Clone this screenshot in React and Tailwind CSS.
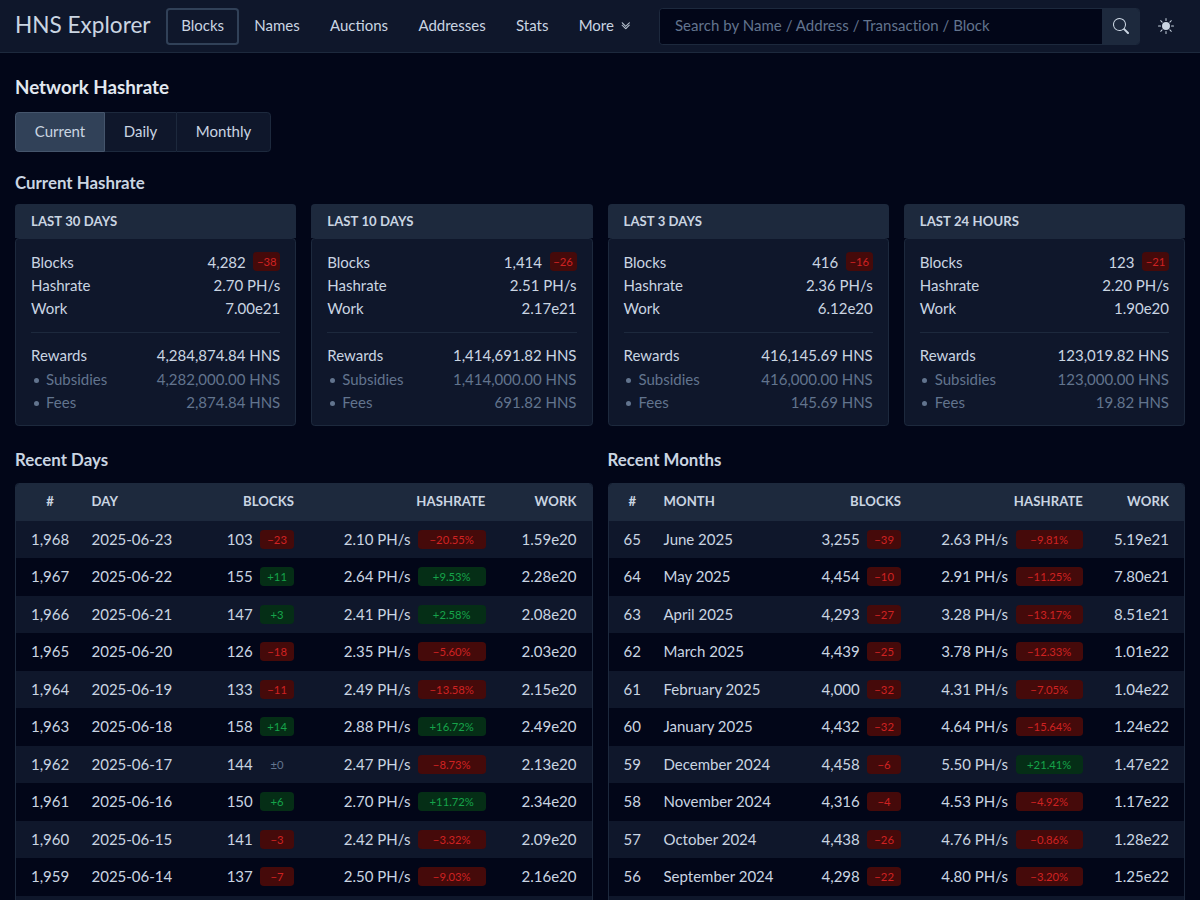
import React from "react";
import { BsSearch, BsChevronDoubleDown, BsSunFill } from "react-icons/bs";

const periods = [
  { title: "Last 30 Days", blocks: "4,282", diff: "−38", hashrate: "2.70 PH/s", work: "7.00e21", rewards: "4,284,874.84", subsidies: "4,282,000.00", fees: "2,874.84" },
  { title: "Last 10 Days", blocks: "1,414", diff: "−26", hashrate: "2.51 PH/s", work: "2.17e21", rewards: "1,414,691.82", subsidies: "1,414,000.00", fees: "691.82" },
  { title: "Last 3 Days", blocks: "416", diff: "−16", hashrate: "2.36 PH/s", work: "6.12e20", rewards: "416,145.69", subsidies: "416,000.00", fees: "145.69" },
  { title: "Last 24 Hours", blocks: "123", diff: "−21", hashrate: "2.20 PH/s", work: "1.90e20", rewards: "123,019.82", subsidies: "123,000.00", fees: "19.82" },
];

const days = [
  ["1,968", "2025-06-23", "103", "−23", "2.10 PH/s", "−20.55%", "1.59e20"],
  ["1,967", "2025-06-22", "155", "+11", "2.64 PH/s", "+9.53%", "2.28e20"],
  ["1,966", "2025-06-21", "147", "+3", "2.41 PH/s", "+2.58%", "2.08e20"],
  ["1,965", "2025-06-20", "126", "−18", "2.35 PH/s", "−5.60%", "2.03e20"],
  ["1,964", "2025-06-19", "133", "−11", "2.49 PH/s", "−13.58%", "2.15e20"],
  ["1,963", "2025-06-18", "158", "+14", "2.88 PH/s", "+16.72%", "2.49e20"],
  ["1,962", "2025-06-17", "144", "±0", "2.47 PH/s", "−8.73%", "2.13e20"],
  ["1,961", "2025-06-16", "150", "+6", "2.70 PH/s", "+11.72%", "2.34e20"],
  ["1,960", "2025-06-15", "141", "−3", "2.42 PH/s", "−3.32%", "2.09e20"],
  ["1,959", "2025-06-14", "137", "−7", "2.50 PH/s", "−9.03%", "2.16e20"],
];

const months = [
  ["65", "June 2025", "3,255", "−39", "2.63 PH/s", "−9.81%", "5.19e21"],
  ["64", "May 2025", "4,454", "−10", "2.91 PH/s", "−11.25%", "7.80e21"],
  ["63", "April 2025", "4,293", "−27", "3.28 PH/s", "−13.17%", "8.51e21"],
  ["62", "March 2025", "4,439", "−25", "3.78 PH/s", "−12.33%", "1.01e22"],
  ["61", "February 2025", "4,000", "−32", "4.31 PH/s", "−7.05%", "1.04e22"],
  ["60", "January 2025", "4,432", "−32", "4.64 PH/s", "−15.64%", "1.24e22"],
  ["59", "December 2024", "4,458", "−6", "5.50 PH/s", "+21.41%", "1.47e22"],
  ["58", "November 2024", "4,316", "−4", "4.53 PH/s", "−4.92%", "1.17e22"],
  ["57", "October 2024", "4,438", "−26", "4.76 PH/s", "−0.86%", "1.28e22"],
  ["56", "September 2024", "4,298", "−22", "4.80 PH/s", "−3.20%", "1.25e22"],
];

function tone(value) {
  if (value.startsWith("+")) return "bg-[#052e16] text-[#16a34a]";
  if (value.startsWith("−")) return "bg-[#450a0a] text-[#cf2222]";
  return "text-slate-500";
}

function Badge({ value, size }) {
  return (
    <span className={`flex h-[18.75px] items-center justify-center rounded-[3.75px] text-[11.25px] leading-none ${size} ${tone(value)}`}>
      {value}
    </span>
  );
}

function NavItem({ children, active }) {
  return (
    <a className={`flex h-[37px] items-center rounded-[3.75px] border-2 px-[13.15px] pb-[2px] ${active ? "border-slate-700" : "border-transparent"}`}>
      {children}
    </a>
  );
}

function Line({ label, children }) {
  return (
    <div className="flex h-[23.44px] items-center justify-between">
      <span>{label}</span>
      <span className="flex items-center gap-[7.5px]">{children}</span>
    </div>
  );
}

function SubLine({ label, children }) {
  return (
    <div className="flex h-[23.44px] items-center justify-between text-slate-500">
      <span className="flex items-center">
        <span className="mt-[2px] mr-[7.5px] ml-[2.5px] size-[5px] rounded-full bg-slate-500" />
        {label}
      </span>
      <span>{children}</span>
    </div>
  );
}

function PeriodCard({ data }) {
  return (
    <section className="flex h-[222px] flex-col">
      <h3 className="flex h-[34px] shrink-0 items-center rounded-t-[3.75px] bg-slate-800 px-4 pb-px text-[13.125px] font-bold tracking-[0.08px] uppercase">
        {data.title}
      </h3>
      <div className="grow rounded-[3.75px] border border-slate-800 bg-slate-900 px-[15px] pt-[10.7px]">
        <Line label="Blocks">
          {data.blocks}
          <Badge value={data.diff} size="w-[27px]" />
        </Line>
        <Line label="Hashrate">{data.hashrate}</Line>
        <Line label="Work">{data.work}</Line>
        <hr className="mt-[11.3px] mb-[11.2px] border-slate-800" />
        <Line label="Rewards">{data.rewards} HNS</Line>
        <SubLine label="Subsidies">{data.subsidies} HNS</SubLine>
        <SubLine label="Fees">{data.fees} HNS</SubLine>
      </div>
    </section>
  );
}

function HistoryTable({ title, unit, rows, columns }) {
  return (
    <section className="min-w-0">
      <h2 className="mb-[11px] text-[16.875px] leading-[24px] font-bold">{title}</h2>
      <div className="overflow-hidden rounded-t-[3.75px] border border-slate-800">
        <div className={`grid h-[36.5px] items-center bg-slate-800 px-[15px] pb-[2px] text-[13.125px] font-bold tracking-[0.08px] uppercase ${columns}`}>
          <span className="text-center">#</span>
          <span className="pl-[22.5px]">{unit}</span>
          <span className="text-right">Blocks</span>
          <span className="text-right">Hashrate</span>
          <span className="text-right">Work</span>
        </div>
        {rows.map((r) => (
          <div key={r[0]} className={`grid h-[37.5px] items-center px-[15px] pb-px odd:bg-slate-950 even:bg-slate-900 ${columns}`}>
            <span className="text-center">{r[0]}</span>
            <span className="pl-[22.5px]">{r[1]}</span>
            <span className="flex items-center justify-end gap-[7.5px]">
              {r[2]}
              <Badge value={r[3]} size="w-[33.75px]" />
            </span>
            <span className="flex items-center justify-end gap-[7.5px]">
              {r[4]}
              <Badge value={r[5]} size="w-[67.5px]" />
            </span>
            <span className="text-right">{r[6]}</span>
          </div>
        ))}
        <div className="h-[37.5px] bg-slate-900" />
      </div>
    </section>
  );
}

export default function App() {
  return (
    <div className="h-[900px] w-[1200px] overflow-hidden bg-slate-950 font-['Lato',sans-serif] text-[15px] leading-[22.5px] text-slate-300">
      <header className="flex h-[53px] items-center border-b border-slate-800 bg-slate-900 px-[15px]">
        <a className="w-[151px] shrink-0 pb-[2px] text-[22.6px]">HNS Explorer</a>
        <nav className="flex shrink-0">
          <NavItem active>Blocks</NavItem>
          <NavItem>Names</NavItem>
          <NavItem>Auctions</NavItem>
          <NavItem>Addresses</NavItem>
          <NavItem>Stats</NavItem>
          <NavItem>
            More
            <BsChevronDoubleDown className="mt-[2px] ml-[7px] size-[9.5px] stroke-[0.8]" />
          </NavItem>
        </nav>
        <div className="mr-[18px] ml-auto flex h-[37px] w-[481px] shrink-0 overflow-hidden rounded-[3.75px] border border-slate-800">
          <div className="flex grow items-center bg-slate-950 px-[15px] pb-[2px] tracking-[0.03px] text-slate-500">
            Search by Name / Address / Transaction / Block
          </div>
          <button className="flex w-[37px] items-center justify-center bg-slate-800 pl-px">
            <BsSearch className="size-4" />
          </button>
        </div>
        <BsSunFill className="mr-[11px] size-4 shrink-0" />
      </header>

      <main className="px-[15px] pt-[19.5px]">
        <h1 className="text-[18.75px] leading-[28px] font-bold text-slate-200">Network Hashrate</h1>
        <div className="mt-[11.5px] flex h-[40px]">
          <button className="w-[90px] rounded-l-[3.75px] border border-slate-600 bg-slate-700 pb-px">Current</button>
          <button className="w-[71px] border-y border-slate-800 bg-slate-900 pb-px">Daily</button>
          <button className="w-[95px] rounded-r-[3.75px] border border-slate-800 bg-slate-900 pb-px">Monthly</button>
        </div>
        <h2 className="mt-[18.5px] text-[16.875px] leading-[24px] font-bold">Current Hashrate</h2>
        <div className="mt-[9.9px] grid grid-cols-4 gap-[15px]">
          {periods.map((p) => (
            <PeriodCard key={p.title} data={p} />
          ))}
        </div>
        <div className="mt-[22px] grid grid-cols-2 gap-[15px]">
          <HistoryTable title="Recent Days" unit="Day" rows={days} columns="grid-cols-[38px_1fr_80px_191.5px_91px]" />
          <HistoryTable title="Recent Months" unit="Month" rows={months} columns="grid-cols-[17.5px_1fr_90px_182px_86px]" />
        </div>
      </main>
    </div>
  );
}
